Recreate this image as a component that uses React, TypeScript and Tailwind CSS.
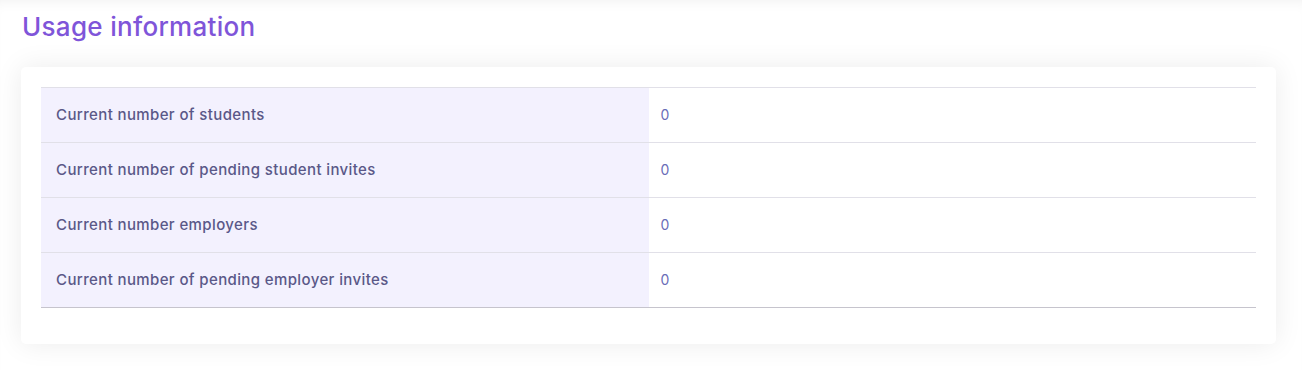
const rows = [
  { label: 'Current number of students', value: 0 },
  { label: 'Current number of pending student invites', value: 0 },
  { label: 'Current number employers', value: 0 },
  { label: 'Current number of pending employer invites', value: 0 },
];

export default function App() {
  return (
    <div
      className="min-h-[370px] bg-white pl-[21px] pr-[26px] pt-[10px] pb-[26px] shadow-[inset_0_10px_14px_-10px_rgba(0,0,0,0.07)]"
      style={{ fontFamily: 'Inter, "Open Sans", sans-serif' }}
    >
      <h2 className="h-[57px] pl-px pt-[1px] text-[26px] leading-[32px] font-medium tracking-[0.3px] text-[#7f55d9]">
        Usage information
      </h2>

      <div className="rounded-[5px] bg-white px-5 pt-5 pb-9 shadow-[0_0_28px_rgba(0,0,0,0.08)]">
        <table className="w-full border-collapse">
          <tbody>
            {rows.map((row, i) => (
              <tr
                key={row.label}
                className={
                  i === rows.length - 1
                    ? 'border-t border-b border-t-[#e1e0e8] border-b-[#c6c4cd]'
                    : 'border-t border-[#e1e0e8]'
                }
              >
                <td className="h-[55px] w-1/2 bg-[#f3f1fe] pl-[15px] pt-px text-[15px] font-medium tracking-[0.38px] text-[#5a5888]">
                  {row.label}
                </td>
                <td className="h-[55px] w-1/2 pl-[12px] pb-px text-[14px] tracking-[0.3px] text-[#6a6db8]">
                  {row.value}
                </td>
              </tr>
            ))}
          </tbody>
        </table>
      </div>
    </div>
  );
}
